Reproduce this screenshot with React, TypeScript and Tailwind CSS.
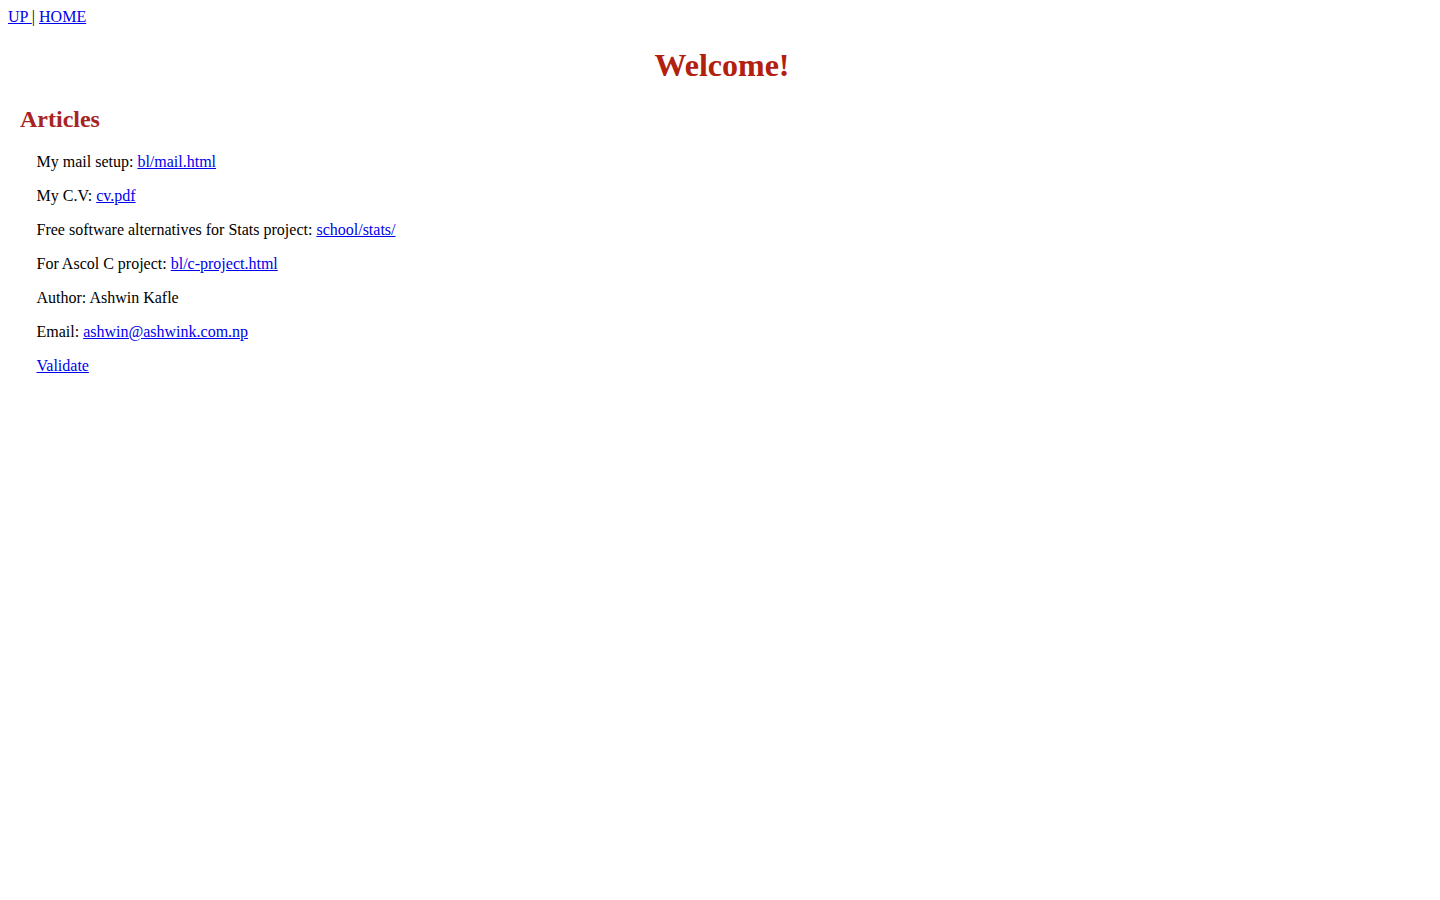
const serif = "font-['Liberation_Serif','Times_New_Roman',serif]";

const articles: { label: string; link?: string }[] = [
  { label: "My mail setup: ", link: "bl/mail.html" },
  { label: "My C.V: ", link: "cv.pdf" },
  { label: "Free software alternatives for Stats project: ", link: "school/stats/" },
  { label: "For Ascol C project: ", link: "bl/c-project.html" },
  { label: "Author: Ashwin Kafle" },
  { label: "Email: ", link: "ashwin@ashwink.com.np" },
];

const linkCls = "text-[#0000ee] underline";

export default function App() {
  return (
    <div className={`${serif} min-h-screen bg-white p-2 text-base leading-[18px] text-black`}>
      <nav>
        <a href="#" className={linkCls}>UP </a>| <a href="#" className={linkCls}>HOME</a>
      </nav>

      <h1 className="my-[21px] pl-1 text-center text-[32px] font-bold leading-[37px] text-[#b2200f]">
        Welcome!
      </h1>

      <div className="pl-[12px]">
        <h2 className="my-5 text-2xl font-bold leading-7 text-[#a82424]">Articles</h2>
        <div className="flex flex-col gap-4 pl-[16.5px]">
          {articles.map((a) => (
            <p key={a.label}>
              {a.label}
              {a.link && (
                <a href="#" className={linkCls}>
                  {a.link}
                </a>
              )}
            </p>
          ))}
          <p>
            <a href="#" className={linkCls}>
              Validate
            </a>
          </p>
        </div>
      </div>
    </div>
  );
}
